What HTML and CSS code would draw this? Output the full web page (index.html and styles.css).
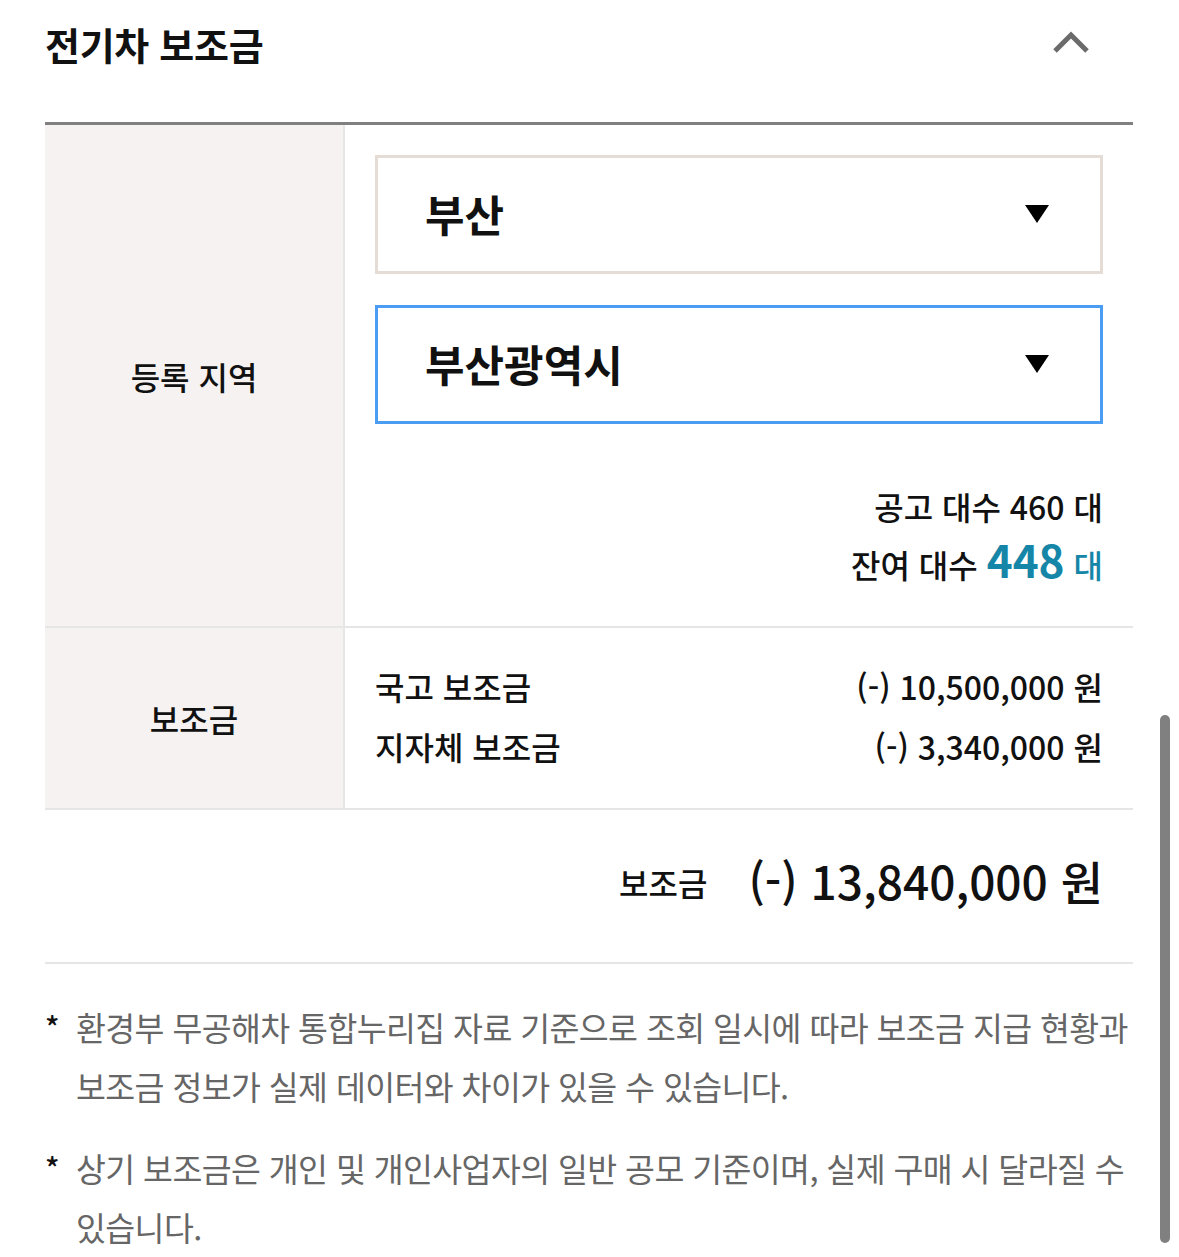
FILE: index.html
```html
<!DOCTYPE html>
<html lang="ko">
<head>
<meta charset="utf-8">
<title>전기차 보조금</title>
<link rel="stylesheet" href="styles.css">
</head>
<body>
<div class="page">
  <header class="sec-head">
    <h2 class="sec-title">전기차 보조금</h2>
    <button class="toggle" type="button" aria-label="접기">
      <svg width="40" height="26" viewBox="0 0 40 26"><polyline points="3,21 19,5 35,21" fill="none" stroke="#6b6b6b" stroke-width="5"/></svg>
    </button>
  </header>

  <div class="table">
    <div class="row row-region">
      <div class="th">등록 지역</div>
      <div class="td td-region">
        <div class="select select-default"><span class="select-text">부산</span><i class="caret"></i></div>
        <div class="select select-active"><span class="select-text">부산광역시</span><i class="caret"></i></div>
        <div class="counts">
          <p class="count-line">공고 대수 460 대</p>
          <p class="count-line remain">잔여 대수 <strong class="remain-num">448</strong> <span class="remain-unit">대</span></p>
        </div>
      </div>
    </div>
    <div class="row row-sub">
      <div class="th">보조금</div>
      <div class="td td-sub">
        <ul class="sub-list">
          <li class="sub-item"><span>국고 보조금</span><span class="amount">(-) 10,500,000 원</span></li>
          <li class="sub-item"><span>지자체 보조금</span><span class="amount">(-) 3,340,000 원</span></li>
        </ul>
      </div>
    </div>
  </div>

  <div class="total">
    <span class="total-label">보조금</span>
    <span class="total-amount">(-) 13,840,000 원</span>
  </div>

  <ul class="notes">
    <li class="note"><span class="star">*</span><span class="note-text">환경부 무공해차 통합누리집 자료 기준으로 조회 일시에 따라 보조금 지급 현황과 보조금 정보가 실제 데이터와 차이가 있을 수 있습니다.</span></li>
    <li class="note"><span class="star">*</span><span class="note-text">상기 보조금은 개인 및 개인사업자의 일반 공모 기준이며, 실제 구매 시 달라질 수 있습니다.</span></li>
  </ul>
</div>
<div class="scrollbar"></div>
</body>
</html>
```

FILE: styles.css
```css
html, body {
  margin: 0;
  padding: 0;
  background: #ffffff;
  overflow: hidden;
}
body {
  font-family: "Noto Sans CJK KR", "Noto Sans", sans-serif;
  color: #111111;
  word-break: keep-all;
}
p, ul, h2 { margin: 0; padding: 0; }
ul { list-style: none; }

.page {
  width: 1088px;
  margin-left: 45px;
}

.sec-head {
  height: 87px;
  display: flex;
  align-items: center;
  justify-content: space-between;
  margin-bottom: 35px;
}
.sec-title {
  font-size: 38px;
  font-weight: 700;
  line-height: 1;
  letter-spacing: -0.3px;
  color: #111;
}
.toggle {
  border: 0;
  background: none;
  padding: 0;
  margin-right: 41px;
  display: flex;
  margin-top: -2px;
}

.table {
  border-top: 3px solid #808080;
}
.row {
  display: flex;
  border-bottom: 2px solid #e6e6e6;
}
.th {
  width: 298px;
  flex: none;
  background: #f5f2f1;
  border-right: 2px solid #e6e6e6;
  display: flex;
  align-items: center;
  justify-content: center;
  font-size: 32px;
  font-weight: 500;
}
.td {
  flex: 1;
  padding: 30px 30px 0 30px;
}
.td-region {
  padding-bottom: 34px;
}

.select {
  height: 113px;
  border: 3px solid #e4dcd5;
  display: flex;
  align-items: center;
  justify-content: space-between;
  padding: 0 51px 0 47px;
}
.select + .select {
  margin-top: 31px;
  border-color: #4a9df2;
}
.select-text {
  font-size: 43px;
  font-weight: 700;
  margin-top: -4px;
}
.caret {
  width: 0;
  height: 0;
  border-left: 12px solid transparent;
  border-right: 12px solid transparent;
  border-top: 18px solid #000;
  margin-top: -2px;
}

.counts {
  margin-top: 57px;
  text-align: right;
}
.count-line {
  font-size: 32px;
  font-weight: 500;
  line-height: 50px;
}
.remain {
  line-height: 56px;
}
.remain-num {
  font-size: 44px;
  font-weight: 700;
  color: #1586a8;
}
.remain-unit {
  color: #1586a8;
}

.td-sub {
  padding: 28px 30px 32px 30px;
}
.sub-item {
  display: flex;
  justify-content: space-between;
  font-size: 32px;
  font-weight: 500;
  line-height: 60px;
}

.total {
  height: 152px;
  display: flex;
  align-items: center;
  justify-content: flex-end;
  gap: 41px;
  padding-right: 30px;
  border-bottom: 2px solid #e6e6e6;
}
.total-label {
  font-size: 32px;
  font-weight: 500;
  margin-top: -8px;
}
.total-amount {
  font-size: 46px;
  font-weight: 500;
  margin-top: -12px;
}

.notes {
  margin-top: 33px;
  margin-right: -10px;
}
.note {
  display: flex;
  font-size: 32.5px;
  line-height: 59px;
}
.note + .note {
  margin-top: 23px;
}
.star {
  width: 31px;
  flex: none;
  color: #111;
  font-size: 30px;
  font-weight: 500;
}
.note-text {
  color: #666666;
  font-weight: 400;
  letter-spacing: -0.6px;
}

.scrollbar {
  position: fixed;
  left: 1160px;
  top: 715px;
  width: 10px;
  height: 528px;
  border-radius: 5px;
  background: #808080;
}
```
